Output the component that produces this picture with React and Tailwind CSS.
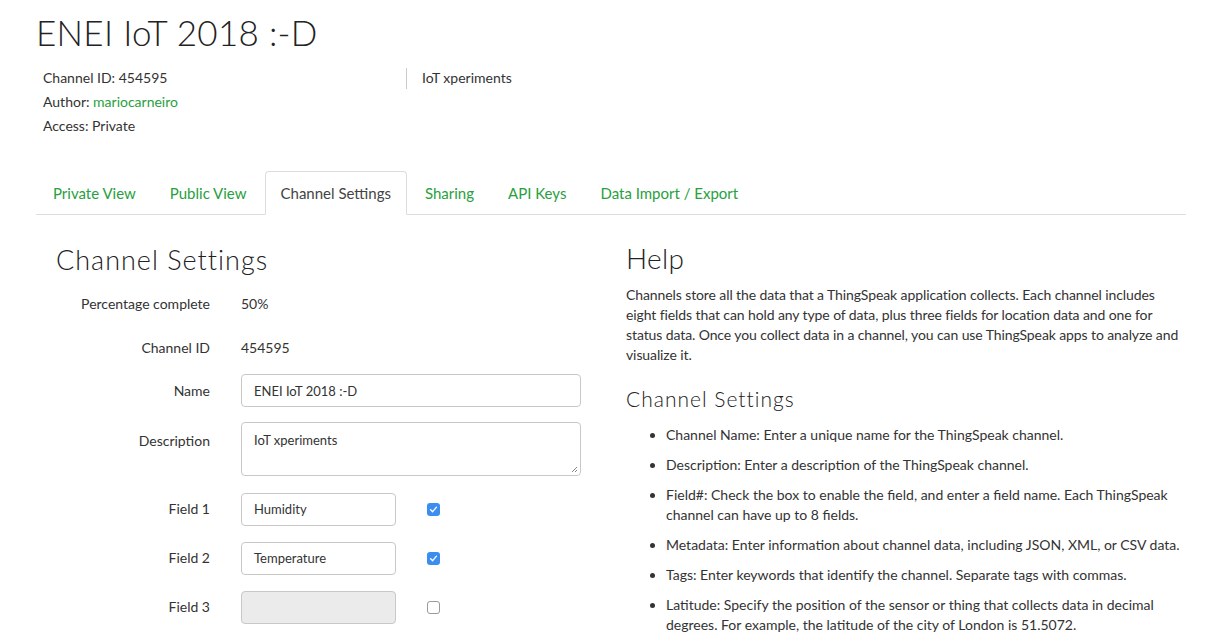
import React from 'react';

const green = 'text-[#28a03e]';

const tabs = ['Private View', 'Public View', 'Channel Settings', 'Sharing', 'API Keys', 'Data Import / Export'];

const Check = ({ checked }) =>
  checked ? (
    <span className="flex h-[13px] w-[13px] items-center justify-center rounded-[3px] bg-[#3b8ef0]">
      <svg width="9" height="9" viewBox="0 0 10 10" fill="none">
        <path d="M1.8 5.2 L4.1 7.4 L8.3 2.4" stroke="white" strokeWidth="1.5" strokeLinecap="round" strokeLinejoin="round" />
      </svg>
    </span>
  ) : (
    <span className="block h-[13px] w-[13px] rounded-[3px] border border-[#9a9a9a] bg-white" />
  );

const Row = ({ label, children, className = '' }) => (
  <div className={`flex items-center ${className}`}>
    <div className="w-[154px] shrink-0 text-right">{label}</div>
    <div className="ml-[31px] flex flex-1 items-center">{children}</div>
  </div>
);

const FieldRow = ({ label, value, checked }) => (
  <Row label={label} className="h-[32px]">
    <div
      className={`flex h-[33px] w-[155px] items-center rounded-[4px] border border-[#c8c8c8] px-[12px] text-[13px] ${
        checked ? 'bg-white' : 'bg-[#ebebeb]'
      }`}
    >
      {value}
    </div>
    <div className="ml-[31px]">
      <Check checked={checked} />
    </div>
  </Row>
);

const helpItems = [
  'Channel Name: Enter a unique name for the ThingSpeak channel.',
  'Description: Enter a description of the ThingSpeak channel.',
  'Field#: Check the box to enable the field, and enter a field name. Each ThingSpeak channel can have up to 8 fields.',
  'Metadata: Enter information about channel data, including JSON, XML, or CSV data.',
  'Tags: Enter keywords that identify the channel. Separate tags with commas.',
  'Latitude: Specify the position of the sensor or thing that collects data in decimal degrees. For example, the latitude of the city of London is 51.5072.',
];

export default function App() {
  return (
    <div className="h-[632px] w-[1222px] overflow-hidden bg-white font-['Lato',sans-serif] text-[14px] leading-[20px] text-[#333]">
      <div className="ml-[36px] w-[1150px]">
        <h1 className="pt-[12px] text-[35px] font-light leading-[40px] tracking-[0.3px] text-[#222]">ENEI IoT 2018 :-D</h1>

        <div className="mt-[14px] flex pl-[7px]">
          <div className="w-[363px] leading-[24px]">
            <div>Channel ID: 454595</div>
            <div>
              Author: <span className={green}>mariocarneiro</span>
            </div>
            <div>Access: Private</div>
          </div>
          <div className="mt-[2px] h-[21px] border-l border-[#ccc] pl-[15px]">IoT xperiments</div>
        </div>

        <div className="mt-[33px] flex border-b border-[#ddd] pl-[1px] text-[15px]">
          {tabs.map((t) => {
            const active = t === 'Channel Settings';
            return (
              <div
                key={t}
                className={`mb-[-1px] mr-[2px] h-[44px] rounded-t-[4px] border px-[15px] pt-[11px] ${
                  active ? 'border-[#ddd] border-b-white bg-white text-[#444]' : `border-transparent ${green}`
                }`}
              >
                {t}
              </div>
            );
          })}
        </div>

        <div className="flex">
          <div className="w-[590px] pl-[20px]">
            <h2 className="mt-[29px] text-[27px] font-light leading-[32px] tracking-[1px] text-[#222]">Channel Settings</h2>
            <div className="mt-[18px] flex flex-col">
              <Row label="Percentage complete" className="h-[20px]">50%</Row>
              <Row label="Channel ID" className="mt-[24px] h-[20px]">454595</Row>
              <Row label="Name" className="mt-[16px] h-[33px]">
                <div className="flex h-[33px] w-[340px] items-center rounded-[4px] border border-[#c8c8c8] px-[12px] text-[13px]">
                  ENEI IoT 2018 :-D
                </div>
              </Row>
              <div className="mt-[15px] flex items-start">
                <div className="w-[154px] shrink-0 pt-[9px] text-right">Description</div>
                <div className="relative ml-[31px] h-[54px] w-[340px] rounded-[4px] border border-[#c8c8c8] px-[12px] pt-[7px] text-[13px]">
                  IoT xperiments
                  <svg className="absolute bottom-[2px] right-[2px]" width="7" height="7" viewBox="0 0 7 7">
                    <path d="M1 6 L6 1 M4 6 L6 4" stroke="#888" strokeWidth="1" />
                  </svg>
                </div>
              </div>
              <div className="mt-[17px] flex flex-col gap-[17px]">
                <FieldRow label="Field 1" value="Humidity" checked />
                <FieldRow label="Field 2" value="Temperature" checked />
                <FieldRow label="Field 3" value="" checked={false} />
              </div>
            </div>
          </div>

          <div className="w-[560px]">
            <h2 className="mt-[27px] text-[28px] font-light leading-[32px] tracking-[0.3px] text-[#222]">Help</h2>
            <p className="mt-[11px] tracking-[-0.1px]">
              Channels store all the data that a ThingSpeak application collects. Each channel includes eight fields that can hold any
              type of data, plus three fields for location data and one for status data. Once you collect data in a channel, you can use
              ThingSpeak apps to analyze and visualize it.
            </p>
            <h3 className="mt-[21px] text-[21px] font-light leading-[26px] tracking-[1px] text-[#222]">Channel Settings</h3>
            <ul className="mt-[13px] list-disc pl-[40px]">
              {helpItems.map((it) => (
                <li key={it} className="mb-[10px]">
                  {it}
                </li>
              ))}
            </ul>
          </div>
        </div>
      </div>
    </div>
  );
}
